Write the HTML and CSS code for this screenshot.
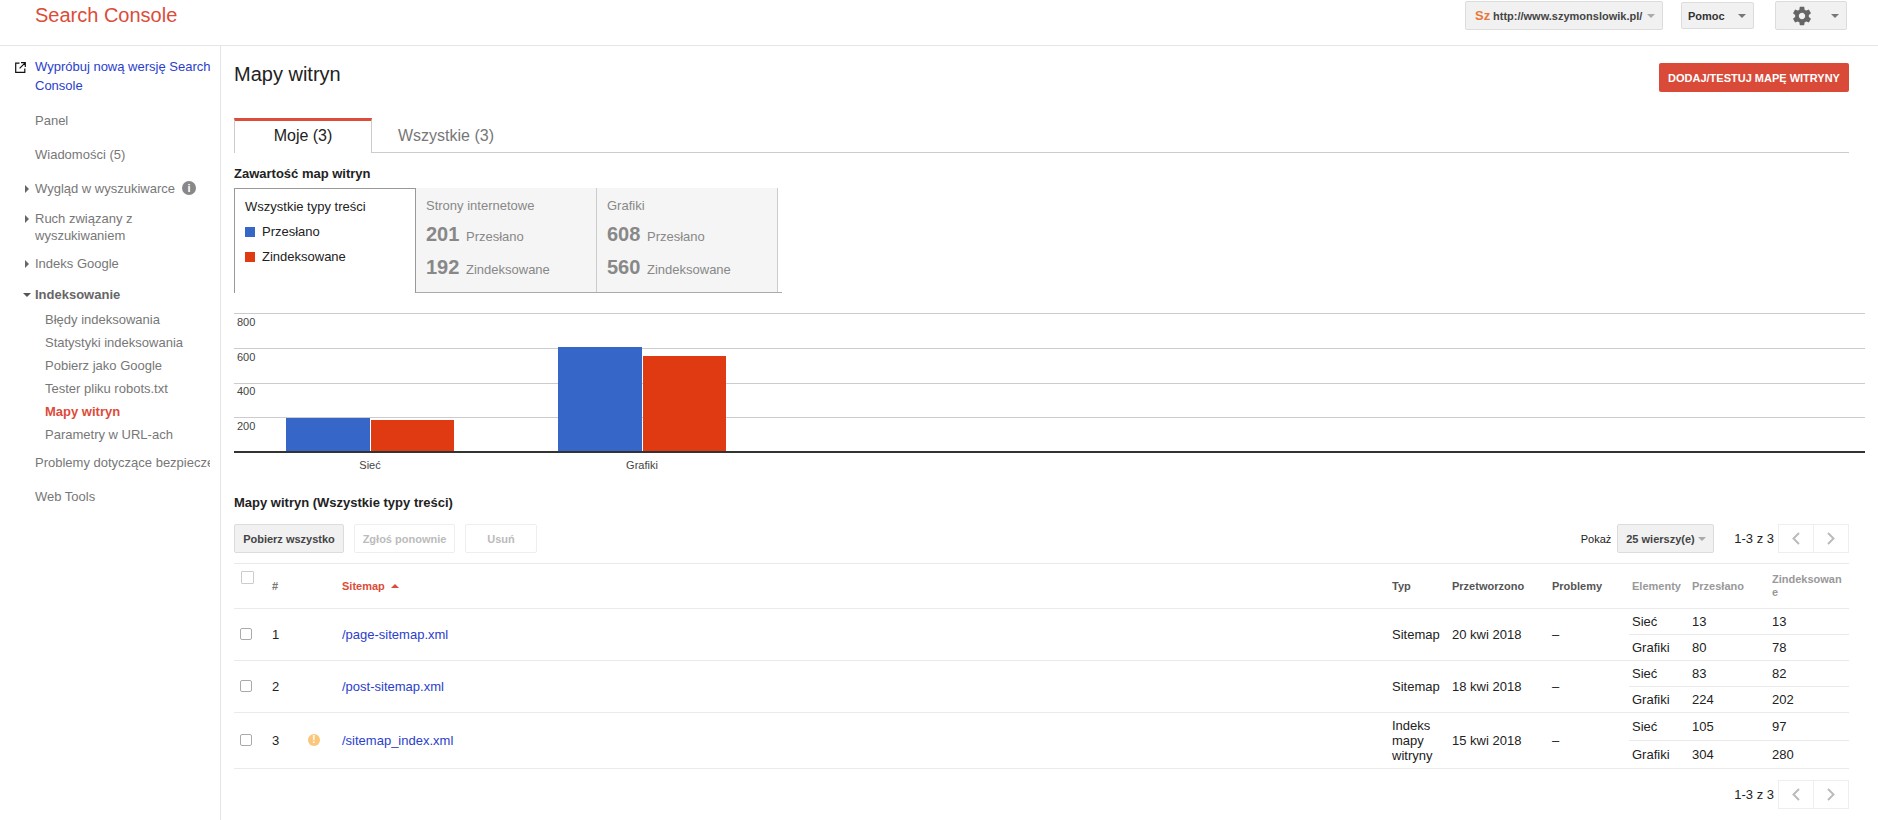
FILE: index.html
```html
<!DOCTYPE html>
<html lang="pl">
<head>
<meta charset="UTF-8">
<meta name="viewport" content="width=device-width, initial-scale=1.0">
<title>Mapy witryn - Search Console</title>
<link rel="stylesheet" href="styles.css">
</head>
<body>

<header class="topbar">
    <div class="logo">Search Console</div>
    <div class="topbar-tools">
        <button type="button" class="btn btn-site"><span class="favicon">Sz</span>http://www.szymonslowik.pl/<span class="caret caret-light"></span></button>
        <button type="button" class="btn btn-help">Pomoc<span class="caret"></span></button>
        <button type="button" class="btn btn-gear">
            <svg class="gear" viewBox="0 0 24 24" width="22" height="22"><path d="M19.43 12.98c.04-.32.07-.64.07-.98s-.03-.66-.07-.98l2.11-1.65c.19-.15.24-.42.12-.64l-2-3.46c-.12-.22-.39-.3-.61-.22l-2.49 1c-.52-.4-1.08-.73-1.69-.98l-.38-2.65C14.46 2.18 14.25 2 14 2h-4c-.25 0-.46.18-.49.42l-.38 2.65c-.61.25-1.17.59-1.69.98l-2.49-1c-.23-.09-.49 0-.61.22l-2 3.46c-.13.22-.07.49.12.64l2.11 1.65c-.04.32-.07.65-.07.98s.03.66.07.98l-2.11 1.65c-.19.15-.24.42-.12.64l2 3.46c.12.22.39.3.61.22l2.49-1c.52.4 1.08.73 1.69.98l.38 2.65c.03.24.24.42.49.42h4c.25 0 .46-.18.49-.42l.38-2.65c.61-.25 1.17-.59 1.69-.98l2.49 1c.23.09.49 0 .61-.22l2-3.46c.12-.22.07-.49-.12-.64l-2.11-1.65zM12 15.5c-1.93 0-3.5-1.57-3.5-3.5s1.57-3.5 3.5-3.5 3.5 1.57 3.5 3.5-1.57 3.5-3.5 3.5z"/></svg>
            <span class="caret"></span>
        </button>
    </div>
</header>

<div class="page">
    <aside class="sidebar">
        <a class="try-new" href="#">
            <svg class="ext-icon" viewBox="0 0 11 11" width="11" height="11"><path d="M4.5 1.2H.7v9.1h9.1V6.5M6 .7h4.3V5M10.1.9 4.6 6.4" fill="none" stroke="#111" stroke-width="1.2"/></svg>
            Wypróbuj nową wersję Search Console
        </a>
        <ul class="nav">
            <li class="nav-panel">Panel</li>
            <li class="nav-msg">Wiadomości (5)</li>
            <li class="nav-look"><span class="arrow"></span>Wygląd w wyszukiwarce<span class="info">i</span></li>
            <li class="nav-traffic"><span class="arrow"></span>Ruch związany z wyszukiwaniem</li>
            <li class="nav-index"><span class="arrow"></span>Indeks Google</li>
            <li class="nav-crawl">
                <div class="nav-open"><span class="arrow-down"></span>Indeksowanie</div>
                <ul class="subnav">
                    <li>Błędy indeksowania</li>
                    <li>Statystyki indeksowania</li>
                    <li>Pobierz jako Google</li>
                    <li>Tester pliku robots.txt</li>
                    <li class="current">Mapy witryn</li>
                    <li>Parametry w URL-ach</li>
                </ul>
            </li>
            <li class="nav-security">Problemy dotyczące bezpieczeństwa</li>
            <li class="nav-tools">Web Tools</li>
        </ul>
    </aside>

    <main class="content">
        <div class="title-row">
            <h1>Mapy witryn</h1>
            <button type="button" class="btn-add">DODAJ/TESTUJ MAPĘ WITRYNY</button>
        </div>

        <div class="tabs">
            <div class="tab active">Moje (3)</div>
            <div class="tab">Wszystkie (3)</div>
        </div>

        <h2 class="section-title first">Zawartość map witryn</h2>
        <div class="tiles">
            <div class="tile tile-legend">
                <div class="tile-name">Wszystkie typy treści</div>
                <div class="legend"><span class="swatch blue"></span>Przesłano</div>
                <div class="legend"><span class="swatch red"></span>Zindeksowane</div>
            </div>
            <div class="tile">
                <div class="tile-head">Strony internetowe</div>
                <div class="stat"><b>201</b>Przesłano</div>
                <div class="stat"><b>192</b>Zindeksowane</div>
            </div>
            <div class="tile">
                <div class="tile-head">Grafiki</div>
                <div class="stat"><b>608</b>Przesłano</div>
                <div class="stat"><b>560</b>Zindeksowane</div>
            </div>
        </div>

        <svg class="chart" width="1631" height="175" viewBox="0 0 1631 175">
            <g stroke="#ccc" stroke-width="1">
                <line x1="0" x2="1631" y1="8.5" y2="8.5"/>
                <line x1="0" x2="1631" y1="43.5" y2="43.5"/>
                <line x1="0" x2="1631" y1="78.5" y2="78.5"/>
                <line x1="0" x2="1631" y1="112.5" y2="112.5"/>
            </g>
            <g class="chart-y">
                <text x="3" y="21">800</text>
                <text x="3" y="56">600</text>
                <text x="3" y="90">400</text>
                <text x="3" y="125">200</text>
            </g>
            <rect x="52" y="113" width="84" height="34" fill="#3766c9"/>
            <rect x="137" y="115" width="83" height="32" fill="#e03a12"/>
            <rect x="324" y="42" width="84" height="105" fill="#3766c9"/>
            <rect x="409" y="51" width="83" height="96" fill="#e03a12"/>
            <line x1="0" x2="1631" y1="147" y2="147" stroke="#333" stroke-width="2"/>
            <g class="chart-x">
                <text x="136" y="164">Sieć</text>
                <text x="408" y="164">Grafiki</text>
            </g>
        </svg>

        <h2 class="section-title second">Mapy witryn (Wszystkie typy treści)</h2>
        <div class="toolbar">
            <div class="actions">
                <button type="button" class="btn btn-action">Pobierz wszystko</button>
                <button type="button" class="btn-off btn-resubmit">Zgłoś ponownie</button>
                <button type="button" class="btn-off btn-remove">Usuń</button>
            </div>
            <div class="paging">
                <span class="show-label">Pokaż</span>
                <button type="button" class="btn btn-rows">25 wierszy(e)<span class="caret caret-light"></span></button>
                <span class="range">1-3 z 3</span>
                <div class="pager">
                    <button type="button"><svg viewBox="0 0 8 13" width="8" height="13"><path d="M7 1 1.5 6.5 7 12" fill="none" stroke="#bbb" stroke-width="2"/></svg></button>
                    <button type="button"><svg viewBox="0 0 8 13" width="8" height="13"><path d="M1 1l5.5 5.5L1 12" fill="none" stroke="#bbb" stroke-width="2"/></svg></button>
                </div>
            </div>
        </div>

        <table class="sitemaps">
            <colgroup>
                <col class="c-check"><col class="c-num"><col class="c-warn"><col class="c-path"><col class="c-type"><col class="c-date"><col class="c-prob"><col class="c-item"><col class="c-sent"><col class="c-done">
            </colgroup>
            <thead>
                <tr>
                    <th class="head-check"><input type="checkbox" class="check check-all"></th>
                    <th class="head-num">#</th>
                    <th></th>
                    <th class="sorted">Sitemap<span class="sort-up"></span></th>
                    <th>Typ</th>
                    <th>Przetworzono</th>
                    <th>Problemy</th>
                    <th class="muted pad">Elementy</th>
                    <th class="muted">Przesłano</th>
                    <th class="muted wrap">Zindeksowane</th>
                </tr>
            </thead>
            <tbody>
                <tr class="sub">
                    <td rowspan="2" class="cell-check"><input type="checkbox" class="check"></td>
                    <td rowspan="2">1</td>
                    <td rowspan="2"></td>
                    <td rowspan="2"><a href="#">/page-sitemap.xml</a></td>
                    <td rowspan="2">Sitemap</td>
                    <td rowspan="2">20 kwi 2018</td>
                    <td rowspan="2">–</td>
                    <td class="pad">Sieć</td><td>13</td><td>13</td>
                </tr>
                <tr class="sub inner">
                    <td class="pad">Grafiki</td><td>80</td><td>78</td>
                </tr>
                <tr class="sub">
                    <td rowspan="2" class="cell-check"><input type="checkbox" class="check"></td>
                    <td rowspan="2">2</td>
                    <td rowspan="2"></td>
                    <td rowspan="2"><a href="#">/post-sitemap.xml</a></td>
                    <td rowspan="2">Sitemap</td>
                    <td rowspan="2">18 kwi 2018</td>
                    <td rowspan="2">–</td>
                    <td class="pad">Sieć</td><td>83</td><td>82</td>
                </tr>
                <tr class="sub inner">
                    <td class="pad">Grafiki</td><td>224</td><td>202</td>
                </tr>
                <tr class="sub tall">
                    <td rowspan="2" class="cell-check"><input type="checkbox" class="check"></td>
                    <td rowspan="2">3</td>
                    <td rowspan="2"><span class="warn">!</span></td>
                    <td rowspan="2"><a href="#">/sitemap_index.xml</a></td>
                    <td rowspan="2" class="type-long">Indeks mapy witryny</td>
                    <td rowspan="2">15 kwi 2018</td>
                    <td rowspan="2">–</td>
                    <td class="pad">Sieć</td><td>105</td><td>97</td>
                </tr>
                <tr class="sub inner tall">
                    <td class="pad">Grafiki</td><td>304</td><td>280</td>
                </tr>
            </tbody>
        </table>

        <div class="paging paging-bottom">
            <span class="range">1-3 z 3</span>
            <div class="pager">
                <button type="button"><svg viewBox="0 0 8 13" width="8" height="13"><path d="M7 1 1.5 6.5 7 12" fill="none" stroke="#bbb" stroke-width="2"/></svg></button>
                <button type="button"><svg viewBox="0 0 8 13" width="8" height="13"><path d="M1 1l5.5 5.5L1 12" fill="none" stroke="#bbb" stroke-width="2"/></svg></button>
            </div>
        </div>
    </main>
</div>

</body>
</html>
```

FILE: styles.css
```css
* {
    box-sizing: border-box;
}

body {
    font-family: "Liberation Sans", Arial, sans-serif;
    font-size: 13px;
    margin: 0;
    padding: 0;
    color: #222;
    background-color: #fff;
    overflow-x: hidden;
}

button {
    font-family: inherit;
    cursor: pointer;
}

/* top bar */
.topbar {
    display: flex;
    justify-content: space-between;
    height: 46px;
    padding: 1px 31px 0 35px;
    border-bottom: 1px solid #e5e5e5;
}

.logo {
    font-size: 20px;
    line-height: 28px;
    color: #dd4b39;
}

.topbar-tools {
    display: flex;
    align-items: flex-start;
}

.btn {
    display: inline-flex;
    align-items: center;
    height: 29px;
    padding: 0;
    border: 1px solid #dcdcdc;
    border-radius: 2px;
    background-color: #f1f1f1;
    font-size: 11px;
    font-weight: bold;
    color: #444;
}

.btn-site {
    width: 198px;
    padding-left: 9px;
}

.favicon {
    width: 18px;
    font-size: 13px;
    text-align: left;
    color: #e8773a;
}

.btn-help {
    width: 73px;
    height: 27px;
    margin: 1px 0 0 18px;
    padding-left: 6px;
    color: #333;
}

.btn-gear {
    width: 72px;
    margin-left: 21px;
    padding-left: 15px;
}

.gear {
    fill: #666;
}

.caret {
    width: 0;
    height: 0;
    margin-left: auto;
    margin-right: 7px;
    border-left: 4px solid transparent;
    border-right: 4px solid transparent;
    border-top: 4px solid #777;
}

.caret-light {
    border-top-color: #aaa;
}

/* sidebar */
.page {
    display: flex;
}

.sidebar {
    flex: none;
    width: 221px;
    min-height: 774px;
    padding: 11px 10px 0 0;
    border-right: 1px solid #e5e5e5;
    color: #777;
}

.try-new {
    display: block;
    position: relative;
    margin-right: -8px;
    padding-left: 35px;
    line-height: 19px;
    color: #2a3ecb;
    text-decoration: none;
}

.ext-icon {
    position: absolute;
    left: 15px;
    top: 5px;
}

.nav, .subnav {
    list-style: none;
    margin: 0;
    padding: 0;
}

.nav > li {
    position: relative;
    padding-left: 35px;
    line-height: 18px;
    white-space: nowrap;
    overflow: hidden;
}

.nav-panel { margin-top: 17px; }
.nav-msg { margin-top: 16px; }
.nav-look { margin-top: 16px; }

.nav .nav-traffic {
    margin-top: 12px;
    line-height: 17px;
    white-space: normal;
    padding-right: 30px;
}

.nav-index { margin-top: 11px; }
.nav-crawl { margin-top: 13px; }
.nav-security { margin-top: 8px; }
.nav-tools { margin-top: 16px; }

.arrow {
    position: absolute;
    left: 25px;
    top: 5px;
    border-top: 4px solid transparent;
    border-bottom: 4px solid transparent;
    border-left: 4px solid #666;
}

.arrow-down {
    position: absolute;
    left: 23px;
    top: 7px;
    border-left: 4px solid transparent;
    border-right: 4px solid transparent;
    border-top: 4px solid #555;
}

.info {
    display: inline-block;
    width: 14px;
    height: 14px;
    margin-left: 7px;
    border-radius: 50%;
    background-color: #888;
    color: #fff;
    font-size: 11px;
    font-weight: bold;
    line-height: 14px;
    text-align: center;
    vertical-align: 1px;
}

.nav-open {
    font-weight: bold;
    color: #666;
}

.subnav {
    margin: 4px 0 0 10px;
}

.subnav li {
    line-height: 23px;
}

.subnav .current {
    font-weight: bold;
    color: #dd4b39;
}

/* main column */
.content {
    flex: 1;
    min-width: 0;
    padding: 17px 29px 0 13px;
}

.title-row {
    display: flex;
    justify-content: space-between;
    height: 29px;
}

h1 {
    margin: 0;
    font-size: 20px;
    font-weight: normal;
    line-height: 22px;
    color: #222;
}

.btn-add {
    width: 190px;
    height: 29px;
    padding: 0;
    border: none;
    border-radius: 2px;
    background-color: #d94a38;
    color: #fff;
    font-size: 11px;
    font-weight: bold;
}

.tabs {
    display: flex;
    height: 35px;
    margin-top: 26px;
    border-bottom: 1px solid #ccc;
}

.tab {
    padding: 0 0 0 26px;
    font-size: 16px;
    line-height: 35px;
    color: #777;
}

.tab.active {
    width: 138px;
    height: 35px;
    padding: 0;
    border: 1px solid #ccc;
    border-top: 3px solid #dd4b39;
    border-bottom: none;
    background-color: #fff;
    color: #222;
    line-height: 30px;
    text-align: center;
}

.section-title {
    margin: 0;
    font-size: 13px;
    font-weight: bold;
    line-height: 16px;
    color: #222;
}

.section-title.first { margin-top: 13px; }
.section-title.second { margin-top: 15px; }

.tiles {
    display: flex;
    width: 548px;
    height: 105px;
    margin-top: 6px;
    border-bottom: 1px solid #aaa;
}

.tile {
    width: 181px;
    height: 104px;
    padding: 9px 0 0 10px;
    border-right: 1px solid #ccc;
    background-color: #f5f5f5;
    color: #888;
}

.tile-legend {
    width: 182px;
    height: 105px;
    padding: 10px 0 0 10px;
    border: 1px solid #999;
    border-bottom: none;
    background-color: #fff;
    color: #222;
}

.tile-name {
    line-height: 16px;
}

.legend {
    display: flex;
    align-items: center;
    height: 25px;
}

.tile-name + .legend {
    margin-top: 4px;
}

.swatch {
    width: 10px;
    height: 10px;
    margin-right: 7px;
}

.swatch.blue { background-color: #3766c9; }
.swatch.red { background-color: #e03a12; }

.tile-head {
    line-height: 18px;
}

.stat {
    display: flex;
    align-items: center;
    height: 33px;
}

.tile-head + .stat {
    margin-top: 5px;
}

.stat b {
    width: 40px;
    font-size: 20px;
    line-height: 24px;
    margin-top: -5px;
}

.chart {
    display: block;
    margin-top: 12px;
}

.chart text {
    font-family: "Liberation Sans", Arial, sans-serif;
    font-size: 11px;
}

.chart-y text {
    fill: #444;
}

.chart-x text {
    fill: #444;
    text-anchor: middle;
}

.toolbar {
    display: flex;
    justify-content: space-between;
    margin-top: 13px;
}

.actions {
    display: flex;
    gap: 10px;
}

.btn-action {
    justify-content: center;
    width: 110px;
}

.btn-off {
    height: 29px;
    padding: 0;
    border: 1px solid #eee;
    border-radius: 2px;
    background-color: #fff;
    color: #bbb;
    font-size: 11px;
    font-weight: bold;
}

.btn-resubmit { width: 101px; }
.btn-remove { width: 72px; }

.paging {
    display: flex;
    align-items: center;
}

.show-label {
    font-size: 11px;
    margin-right: 6px;
}

.btn-rows {
    width: 97px;
    padding-left: 8px;
}

.range {
    margin: 0 4px 0 20px;
    font-size: 13px;
}

.pager {
    display: flex;
}

.pager button {
    display: flex;
    align-items: center;
    justify-content: center;
    width: 36px;
    height: 29px;
    padding: 0;
    border: 1px solid #eee;
    background-color: #fff;
}

.pager button + button {
    margin-left: -1px;
}

/* table */
.sitemaps {
    width: 1615px;
    margin-top: 10px;
    border-collapse: collapse;
    table-layout: fixed;
    color: #222;
}

.c-check { width: 38px; }
.c-num { width: 34px; }
.c-warn { width: 36px; }
.c-path { width: 1050px; }
.c-type { width: 60px; }
.c-date { width: 100px; }
.c-prob { width: 77px; }
.c-item { width: 63px; }
.c-sent { width: 80px; }
.c-done { width: 77px; }

.sitemaps th, .sitemaps td {
    padding: 0;
    text-align: left;
    vertical-align: middle;
    border-top: 1px solid #eaeaea;
}

.sitemaps thead tr {
    height: 45px;
    border-bottom: 1px solid #eaeaea;
}

.sitemaps th {
    font-size: 11px;
    font-weight: bold;
    color: #555;
}

.sitemaps .head-num {
    color: #777;
}

.sitemaps .sorted {
    color: #dd4b39;
}

.sort-up {
    display: inline-block;
    margin-left: 6px;
    vertical-align: 2px;
    border-left: 4px solid transparent;
    border-right: 4px solid transparent;
    border-bottom: 4px solid #dd4b39;
}

.sitemaps .muted {
    color: #999;
}

.sitemaps .pad {
    padding-left: 3px;
}

.sitemaps .wrap {
    padding-right: 5px;
    line-height: 13px;
    word-break: break-all;
}

.sitemaps tbody tr {
    height: 26px;
    border-bottom: 1px solid #eaeaea;
}

.sitemaps tbody tr.tall {
    height: 28px;
}

.sitemaps td {
    line-height: 15px;
}

.sitemaps a {
    color: #2a3ecb;
    text-decoration: none;
}

.check {
    display: block;
    width: 12px;
    height: 12px;
    margin: -1px 0 0 6px;
    appearance: none;
    border: 1px solid #aaa;
    border-radius: 2px;
    background-color: #fff;
}

.check-all {
    width: 13px;
    height: 13px;
    margin: -15px 0 0 7px;
    border-color: #ccc;
    border-radius: 1px;
}

.head-num {
    padding-top: 2px;
}

.warn {
    display: block;
    width: 12px;
    height: 12px;
    margin: -2px 0 0 2px;
    border-radius: 50%;
    background-color: #fbc67a;
    color: #fff;
    font-size: 10px;
    font-weight: bold;
    line-height: 12px;
    text-align: center;
}

.paging-bottom {
    justify-content: flex-end;
    margin-top: 11px;
}
```
